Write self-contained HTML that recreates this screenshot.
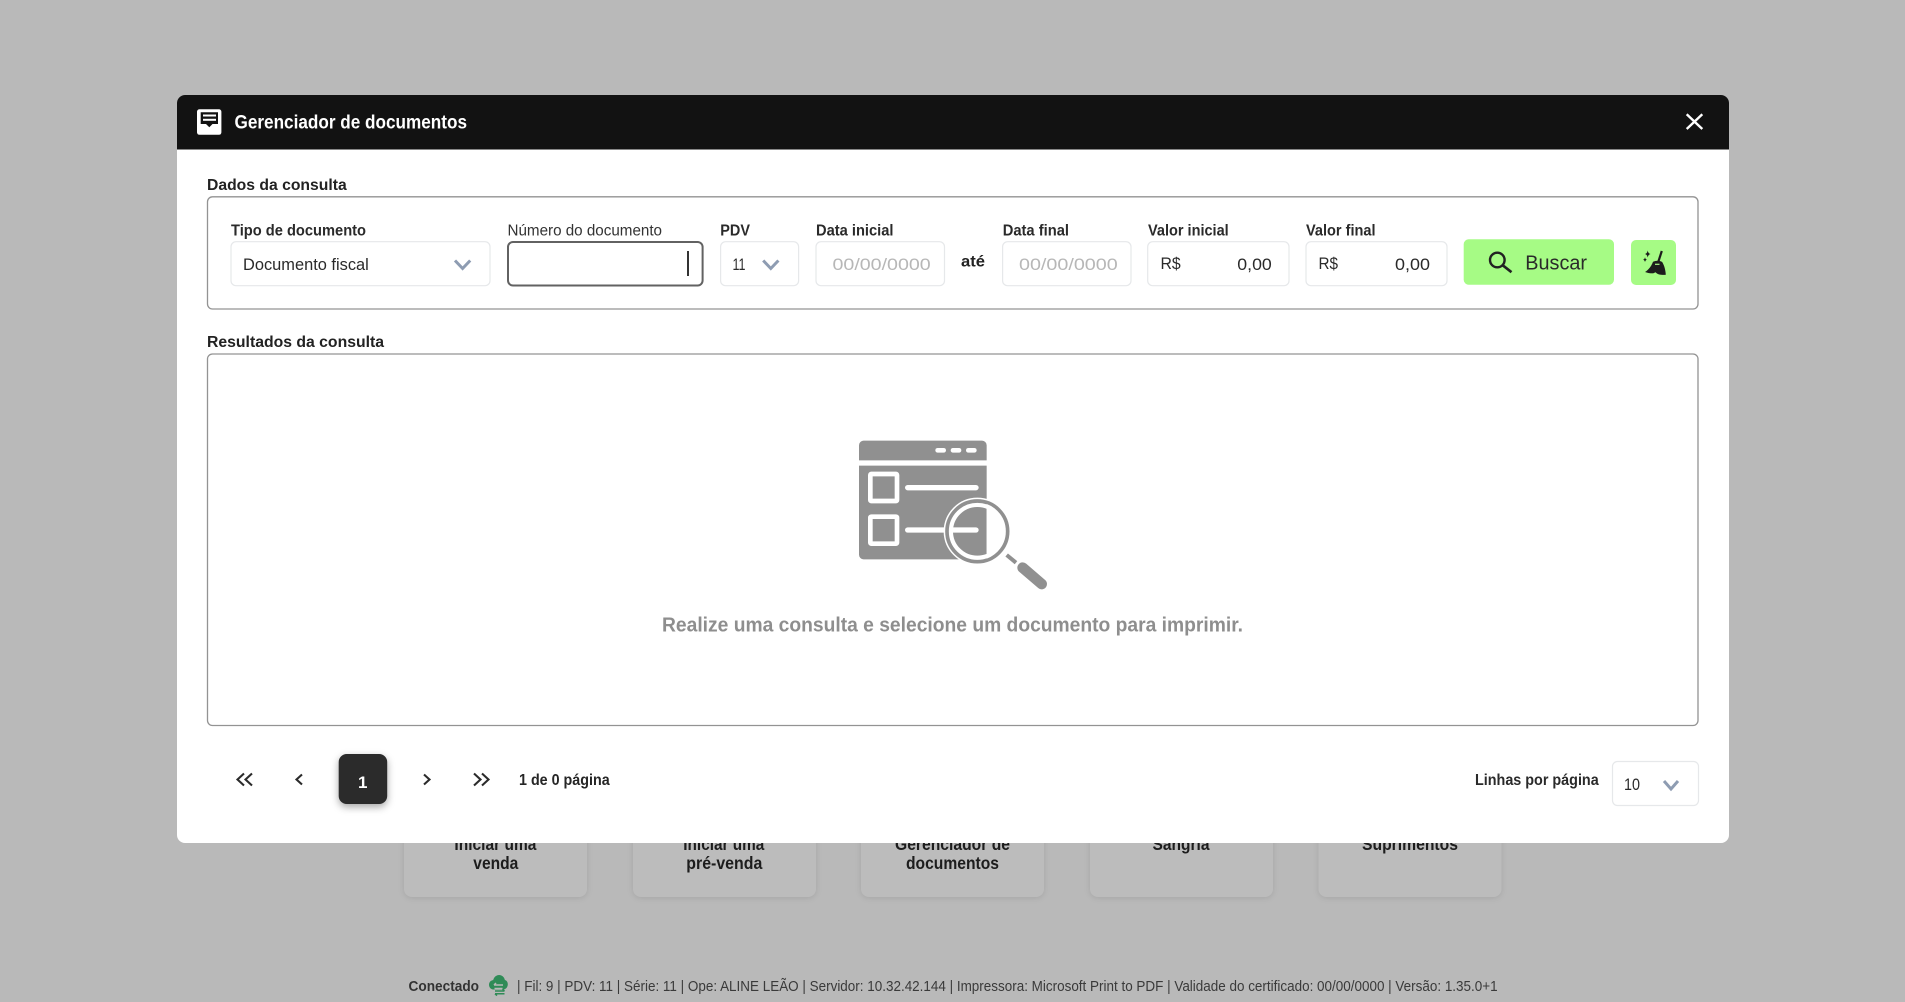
<!DOCTYPE html>
<html lang="pt-BR">
<head>
<meta charset="utf-8">
<title>Gerenciador de documentos</title>
<style>
html,body{margin:0;padding:0;width:1905px;height:1002px;overflow:hidden;background:#b9b9b9}
svg{display:block;position:absolute;left:0;top:0}
text{font-family:"Liberation Sans",sans-serif;fill:#222}
.b{font-weight:700}
.card{fill:#bcbcbc;filter:drop-shadow(0 1px 3px rgba(0,0,0,.1))}
.cardt{font-size:17.500px;font-weight:700;fill:#1d1d1d}
.lab{font-size:15.500px;font-weight:700;fill:#2a2a2a}
.inp{fill:#fff;stroke:#e6e8ea;stroke-width:1.200}
.val{font-size:16.500px;fill:#2a2a2a}
.ph{font-size:16.500px;fill:#b7b7b7}
.chev{fill:none;stroke:#8e9cb2;stroke-width:3}
.pg{fill:none;stroke:#2b2b2b;stroke-width:2.100}
</style>
</head>
<body>
<svg width="1905" height="1002" viewBox="0 0 1905 1002" xmlns="http://www.w3.org/2000/svg">
<rect width="1905" height="1002" fill="#b9b9b9"/>

<!-- background cards -->
<rect class="card" x="404" y="790" width="183" height="107" rx="8"/>
<rect class="card" x="633" y="790" width="183" height="107" rx="8"/>
<rect class="card" x="861" y="790" width="183" height="107" rx="8"/>
<rect class="card" x="1090" y="790" width="183" height="107" rx="8"/>
<rect class="card" x="1318.500" y="790" width="183" height="107" rx="8"/>
<text class="cardt" x="454.400" y="850" textLength="82" lengthAdjust="spacingAndGlyphs">Iniciar uma</text>
<text class="cardt" x="473.300" y="869" textLength="45" lengthAdjust="spacingAndGlyphs">venda</text>
<text class="cardt" x="683.300" y="850" textLength="81" lengthAdjust="spacingAndGlyphs">Iniciar uma</text>
<text class="cardt" x="686.300" y="869" textLength="76" lengthAdjust="spacingAndGlyphs">pré-venda</text>
<text class="cardt" x="895" y="850" textLength="115" lengthAdjust="spacingAndGlyphs">Gerenciador de</text>
<text class="cardt" x="906" y="869" textLength="93" lengthAdjust="spacingAndGlyphs">documentos</text>
<text class="cardt" x="1152.500" y="850" textLength="57" lengthAdjust="spacingAndGlyphs">Sangria</text>
<text class="cardt" x="1362" y="850" textLength="96" lengthAdjust="spacingAndGlyphs">Suprimentos</text>

<!-- status bar -->
<text x="408.500" y="991" class="b" font-size="14.500" style="fill:#333" textLength="70.500" lengthAdjust="spacingAndGlyphs">Conectado</text>
<g>
  <path d="M494 989.500c-3 0-5-2-5-4.800 0-2.500 1.800-4.400 4.200-4.600 .8-3 3.100-5.100 5.900-5.100s5.200 2.100 5.800 5c1.800 .4 2.900 2.200 2.900 4.200 0 2.900-2 5.300-5 5.300z" fill="#2f8b57"/>
  <path d="M494 985h9M494 985l2-2M502.500 988.500h-8" stroke="#b9b9b9" stroke-width="1.500" fill="none"/>
  <path d="M495 991h9.500M504.500 991l-2-1.800M504.500 993.800h-9.500M495 993.800l2 1.800" stroke="#2f8b57" stroke-width="1.500" fill="none"/>
</g>
<text x="517" y="991" font-size="14.500" style="fill:#3a3a3a" textLength="980.600" lengthAdjust="spacingAndGlyphs">| Fil: 9 | PDV: 11 | Série: 11 | Ope: ALINE LEÃO | Servidor: 10.32.42.144 | Impressora: Microsoft Print to PDF | Validade do certificado: 00/00/0000 | Versão: 1.35.0+1</text>

<!-- modal -->
<rect x="177" y="95" width="1552" height="748" rx="8" fill="#fff"/>
<path d="M177 149.500V103a8 8 0 0 1 8-8H1721a8 8 0 0 1 8 8V149.500z" fill="#121212"/>

<!-- header icon -->
<rect x="197" y="109.300" width="24.400" height="25.500" rx="2.500" fill="#fff"/>
<path d="M200.700 112.300H218V124H212.500L209.300 127.300 206 124H200.700z" fill="#121212"/>
<rect x="203" y="114.500" width="13" height="2" fill="#fff"/>
<rect x="203" y="118.800" width="13" height="2" fill="#fff"/>
<text x="234.500" y="128.300" class="b" font-size="19" style="fill:#fff" textLength="232.500" lengthAdjust="spacingAndGlyphs">Gerenciador de documentos</text>
<path d="M1686.700 114.300L1702.300 129M1702.300 114.300L1686.700 129" stroke="#fff" stroke-width="2.400" fill="none"/>

<!-- Dados -->
<text x="207" y="190" class="b" font-size="16" style="fill:#222" textLength="139.700" lengthAdjust="spacingAndGlyphs">Dados da consulta</text>
<rect x="207.500" y="196.800" width="1490.500" height="112.200" rx="5" fill="#fff" stroke="#939393" stroke-width="1.300"/>

<text class="lab" x="231" y="235.700" textLength="135" lengthAdjust="spacingAndGlyphs">Tipo de documento</text>
<rect class="inp" x="231" y="241.700" width="259" height="44" rx="5"/>
<text class="val" x="243" y="270" textLength="125.800" lengthAdjust="spacingAndGlyphs">Documento fiscal</text>
<path class="chev" d="M455 260.500L462.600 268.500L470.200 260.500"/>

<text x="507.500" y="235.700" font-size="15.500" style="fill:#333" textLength="154.500" lengthAdjust="spacingAndGlyphs">Número do documento</text>
<rect x="508" y="242" width="194.600" height="43.500" rx="5" fill="#fff" stroke="#626262" stroke-width="2"/>
<rect x="687" y="251" width="2" height="25" fill="#333"/>

<text class="lab" x="720.300" y="235.700" textLength="29.700" lengthAdjust="spacingAndGlyphs">PDV</text>
<rect class="inp" x="720.600" y="241.700" width="78" height="44" rx="5"/>
<text class="val" x="732.500" y="270" textLength="13" lengthAdjust="spacingAndGlyphs">11</text>
<path class="chev" d="M763.200 260.500L770.800 268.500L778.400 260.500"/>

<text class="lab" x="816" y="235.700" textLength="77.500" lengthAdjust="spacingAndGlyphs">Data inicial</text>
<rect class="inp" x="816" y="241.700" width="128.500" height="44" rx="5"/>
<text class="ph" x="832.500" y="270" textLength="98.200" lengthAdjust="spacingAndGlyphs">00/00/0000</text>

<text x="961" y="266.700" class="b" font-size="15.500" style="fill:#222" textLength="24" lengthAdjust="spacingAndGlyphs">até</text>

<text class="lab" x="1002.700" y="235.700" textLength="66.300" lengthAdjust="spacingAndGlyphs">Data final</text>
<rect class="inp" x="1002.600" y="241.700" width="128.400" height="44" rx="5"/>
<text class="ph" x="1019" y="270" textLength="98.700" lengthAdjust="spacingAndGlyphs">00/00/0000</text>

<text class="lab" x="1148" y="235.700" textLength="80.700" lengthAdjust="spacingAndGlyphs">Valor inicial</text>
<rect class="inp" x="1147.700" y="241.700" width="141.300" height="44" rx="5"/>
<text class="val" x="1160.500" y="269" textLength="20.200" lengthAdjust="spacingAndGlyphs">R$</text>
<text class="val" x="1237.300" y="270" textLength="34.500" lengthAdjust="spacingAndGlyphs">0,00</text>

<text class="lab" x="1306" y="235.700" textLength="69.500" lengthAdjust="spacingAndGlyphs">Valor final</text>
<rect class="inp" x="1306" y="241.700" width="141" height="44" rx="5"/>
<text class="val" x="1318.500" y="269" textLength="19.500" lengthAdjust="spacingAndGlyphs">R$</text>
<text class="val" x="1395" y="270" textLength="35" lengthAdjust="spacingAndGlyphs">0,00</text>

<!-- Buscar -->
<rect x="1463.700" y="239.300" width="150.300" height="45.400" rx="5" fill="#a6fb85"/>
<circle cx="1497.300" cy="260" r="7.300" fill="none" stroke="#222" stroke-width="2.400"/>
<path d="M1502.600 265.200L1511.500 272.200" stroke="#222" stroke-width="2.600" fill="none"/>
<text x="1525.300" y="269.300" font-size="20.500" style="fill:#2a2a2a" textLength="61.700" lengthAdjust="spacingAndGlyphs">Buscar</text>

<!-- Broom -->
<rect x="1631" y="240" width="45" height="45" rx="5" fill="#a6fb85"/>
<path d="M1661.800 251L1658.400 261.500" stroke="#1c1c1c" stroke-width="2.200" fill="none"/>
<path d="M1653 261.800C1656 260.300 1660 260.300 1662.200 262C1664.500 266 1665.500 270 1665.800 274.800C1661.500 275.200 1657.500 274.500 1655.500 272.200L1653.500 273.300C1650.500 273.500 1647.500 273 1645 272C1648.500 270 1651.500 266 1653 261.800Z" fill="#1c1c1c"/>
<path d="M1655 264.300H1659.500" stroke="#a6fb85" stroke-width="1.200" fill="none"/>
<path d="M1647.700 250.500Q1648.200 253.500 1650.500 254Q1648.200 254.500 1647.700 257.500Q1647.200 254.500 1644.900 254Q1647.200 253.500 1647.700 250.500Z" fill="#1c1c1c"/>
<path d="M1645 257.300Q1645.300 259.300 1647 259.700Q1645.300 260.100 1645 262.100Q1644.700 260.100 1643 259.700Q1644.700 259.300 1645 257.300Z" fill="#1c1c1c"/>

<!-- Resultados -->
<text x="207" y="347" class="b" font-size="16" style="fill:#222" textLength="177" lengthAdjust="spacingAndGlyphs">Resultados da consulta</text>
<rect x="207.500" y="354" width="1490.500" height="371.500" rx="5" fill="#fff" stroke="#939393" stroke-width="1.300"/>

<!-- illustration -->
<g transform="translate(840 420) scale(.33333)">
  <path d="M57 121V76a14 14 0 0 1 14-14H426a14 14 0 0 1 14 14V121z" fill="#909090"/>
  <path d="M57 137H440V418H71a14 14 0 0 1-14-14z" fill="#909090"/>
  <rect x="286" y="84" width="32" height="14" rx="7" fill="#fff"/>
  <rect x="332" y="84" width="32" height="14" rx="7" fill="#fff"/>
  <rect x="378" y="84" width="32" height="14" rx="7" fill="#fff"/>
  <rect x="91" y="162" width="80" height="81" rx="3" fill="none" stroke="#fff" stroke-width="14"/>
  <rect x="91" y="290" width="80" height="81" rx="3" fill="none" stroke="#fff" stroke-width="14"/>
  <path d="M203 203H408" stroke="#fff" stroke-width="16" stroke-linecap="round" fill="none"/>
  <path d="M203 330H408" stroke="#fff" stroke-width="16" stroke-linecap="round" fill="none"/>
  <circle cx="412" cy="334" r="87" fill="none" stroke="#fff" stroke-width="28"/>
  <circle cx="412" cy="334" r="91" fill="none" stroke="#909090" stroke-width="11"/>
  <path d="M440 252A85 85 0 0 1 496 334A85 85 0 0 1 440 416Z" fill="#fff"/>
  <path d="M500 405L528 428" stroke="#909090" stroke-width="12" fill="none"/>
  <path d="M548 443L605 492" stroke="#909090" stroke-width="32" stroke-linecap="round" fill="none"/>
</g>
<text x="662" y="631.500" class="b" font-size="20" style="fill:#8e8e8e" textLength="581" lengthAdjust="spacingAndGlyphs">Realize uma consulta e selecione um documento para imprimir.</text>

<!-- pagination -->
<path class="pg" d="M244 773.500L237.500 779.500L244 785.500M252 773.500L245.500 779.500L252 785.500"/>
<path class="pg" d="M302 774.500L296.500 779.500L302 784.500"/>
<rect x="338.700" y="754" width="48.500" height="50" rx="8" fill="#2b2b2b" style="filter:drop-shadow(0 3px 4px rgba(0,0,0,.35))"/>
<text x="358" y="788" class="b" font-size="17" style="fill:#fff">1</text>
<path class="pg" d="M424 774.500L429.500 779.500L424 784.500"/>
<path class="pg" d="M474 773.500L480.500 779.500L474 785.500M482 773.500L488.500 779.500L482 785.500"/>
<text x="519" y="785" class="b" font-size="15.500" style="fill:#262626" textLength="90.700" lengthAdjust="spacingAndGlyphs">1 de 0 página</text>

<text x="1475" y="785" class="b" font-size="15.500" style="fill:#2a2a2a" textLength="123.700" lengthAdjust="spacingAndGlyphs">Linhas por página</text>
<rect class="inp" x="1612.500" y="761.500" width="86" height="44" rx="5"/>
<text class="val" x="1624" y="790" textLength="16" lengthAdjust="spacingAndGlyphs">10</text>
<path class="chev" d="M1664 781L1671 789L1678 781"/>
</svg>
</body>
</html>
